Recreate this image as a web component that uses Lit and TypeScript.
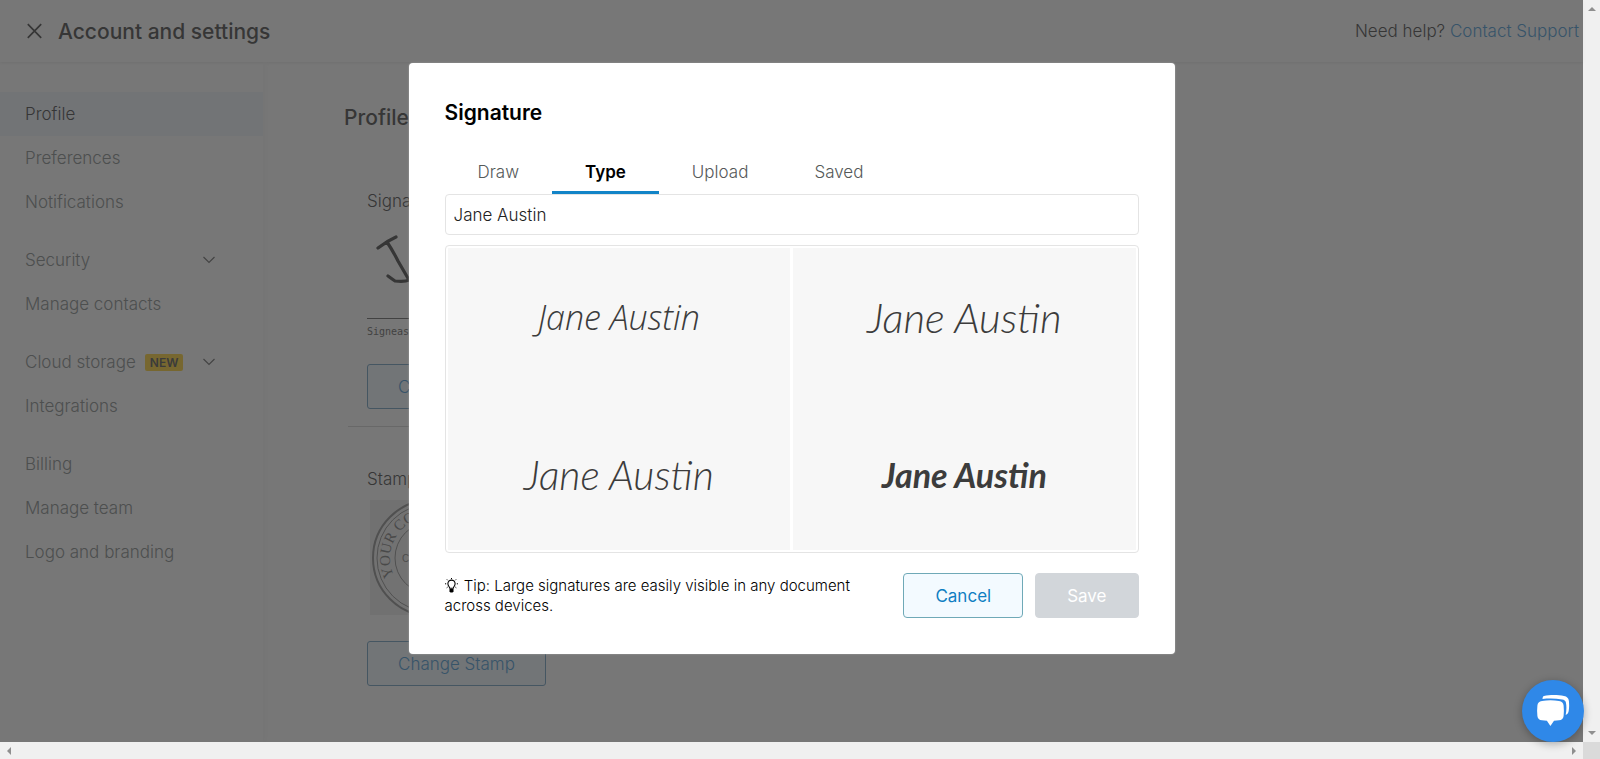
import { LitElement, html, css, svg, nothing } from "lit";
import { customElement, state } from "lit/decorators.js";
import { classMap } from "lit/directives/class-map.js";

interface NavItem {
  label: string;
  expandable?: boolean;
  badge?: string;
}

const NAV_GROUPS: NavItem[][] = [
  [{ label: "Profile" }, { label: "Preferences" }, { label: "Notifications" }],
  [{ label: "Security", expandable: true }, { label: "Manage contacts" }],
  [{ label: "Cloud storage", expandable: true, badge: "NEW" }, { label: "Integrations" }],
  [{ label: "Billing" }, { label: "Manage team" }, { label: "Logo and branding" }],
];

const TABS = ["Draw", "Type", "Upload", "Saved"];
const SIGNATURE_STYLES = ["plain", "flowing", "fine", "brush"];

@customElement("settings-nav")
class SettingsNav extends LitElement {
  static styles = css`
    :host {
      display: block;
      font-size: 17px;
    }
    .nav {
      display: flex;
      flex-direction: column;
      gap: 14px;
      padding-top: 30px;
    }
    .group {
      list-style: none;
      margin: 0;
      padding: 0;
    }
    .item {
      display: flex;
      align-items: center;
      gap: 9px;
      height: 44px;
      padding: 0 47px 0 25px;
      color: #808686;
      text-decoration: none;
    }
    .item.current {
      background: #f0f6fd;
      color: #3c3c3c;
    }
    .badge {
      padding: 0 5px;
      border-radius: 2px;
      background: #ffd02b;
      color: #4b4b4b;
      font-size: 12px;
      font-weight: 600;
      line-height: 17px;
    }
    .chevron {
      margin-left: auto;
    }
  `;

  render() {
    return html`<nav class="nav" aria-label="Settings">
      ${NAV_GROUPS.map(
        (group) => html`<ul class="group">
          ${group.map(
            (item) => html`<li>
              <a
                href="#"
                class=${classMap({ item: true, current: item.label === "Profile" })}
                >${item.label}
                ${item.badge ? html`<span class="badge">${item.badge}</span>` : nothing}
                ${item.expandable
                  ? html`<svg class="chevron" width="14" height="10" viewBox="0 0 14 10" aria-hidden="true">
                      <path d="M1.5 2 7 7.5 12.5 2" fill="none" stroke="#666" stroke-width="1.2" />
                    </svg>`
                  : nothing}
              </a>
            </li>`
          )}
        </ul>`
      )}
    </nav>`;
  }
}

@customElement("profile-panel")
class ProfilePanel extends LitElement {
  static styles = css`
    :host {
      display: block;
      padding: 41px 40px 0 81px;
      color: #3c3c3c;
    }
    h1 {
      margin: 0;
      font-size: 21px;
      font-weight: 500;
      line-height: 30px;
    }
    section {
      max-width: 720px;
      margin-left: 4px;
      padding: 0 19px;
    }
    .signatures {
      padding-top: 55px;
      padding-bottom: 17px;
      border-bottom: 1px solid #d2d2d2;
    }
    .stamps {
      padding-top: 39px;
    }
    h2 {
      margin: 0;
      font-size: 17px;
      font-weight: 300;
      line-height: 26px;
    }
    .sign-area {
      display: flex;
      flex-direction: column;
      width: 260px;
      margin-top: 17px;
    }
    .sign-area svg {
      display: block;
    }
    .sign-id {
      padding-top: 5px;
      border-top: 1px solid #606060;
      color: #606060;
      font-family: "DejaVu Sans Mono", monospace;
      font-size: 10px;
      font-weight: 400;
      line-height: 15px;
    }
    .stamp {
      display: block;
      margin: 8px 0 26px 3px;
    }
    button {
      display: block;
      height: 45px;
      margin-top: 25px;
      padding: 0 30px;
      border: 1px solid #6a9cc0;
      border-radius: 3px;
      background: #f1f8fe;
      color: #4096d6;
      font: inherit;
      font-size: 17px;
    }
  `;

  private stamp() {
    return svg`
      <rect width="118" height="115" fill="#eeeeee" />
      <g transform="translate(61 58)">
        <circle r="58" fill="#f0f0f0" stroke="#8a8a8a" stroke-width="2" />
        <circle r="54" fill="none" stroke="#8a8a8a" />
        <circle r="36" fill="none" stroke="#8a8a8a" />
        <path id="ring" d="M-37 18A41 41 0 1 1 37 18" fill="none" />
        <text font-family="Liberation Serif, serif" font-size="15" fill="#757575">
          <textPath href="#ring">YOUR COMPANY NAME</textPath>
        </text>
        <text x="0" y="4" text-anchor="middle" font-family="Liberation Sans, sans-serif" font-size="10" fill="#808080">CITY, STATE</text>
      </g>`;
  }

  render() {
    return html`<h1>Profile</h1>
      <section class="signatures">
        <h2>Signatures</h2>
        <div class="sign-area">
          <svg width="120" height="87" viewBox="0 0 120 87" role="img" aria-label="Saved signature">
            <path
              d="M11 17Q20 10 29 6M20 11Q26 20 31 30L42 49Q38 51 28 50Q25 48 21 45"
              fill="none" stroke="#3c3c3c" stroke-width="3.2" stroke-linecap="round" stroke-linejoin="round"
            />
          </svg>
          <div class="sign-id">Signeasy ID</div>
        </div>
        <button type="button">Change Signature</button>
      </section>
      <section class="stamps">
        <h2>Stamp</h2>
        <svg class="stamp" width="118" height="115" viewBox="0 0 118 115" role="img" aria-label="Company stamp">
          ${this.stamp()}
        </svg>
        <button type="button">Change Stamp</button>
      </section>`;
  }
}

@customElement("signature-dialog")
class SignatureDialog extends LitElement {
  @state() private name = "Jane Austin";
  @state() private tab = "Type";

  static styles = css`
    :host {
      display: block;
      box-sizing: border-box;
      width: 766px;
      max-width: 100%;
      padding: 36px;
      border-radius: 4px;
      background: #fff;
      color: #000;
      box-shadow: 0 0 2px #aaa;
    }
    h2 {
      margin: 0;
      font-size: 21px;
      font-weight: 600;
      line-height: 27px;
    }
    button,
    input {
      font: inherit;
      font-size: 17px;
    }
    .tabs {
      display: flex;
      margin-top: 24px;
    }
    .tab {
      height: 44px;
      padding: 2px 33px 0;
      border: 0;
      border-bottom: 3px solid transparent;
      background: none;
      color: #555959;
    }
    .tab.active {
      border-color: #1284c7;
      color: #000;
      font-weight: 600;
    }
    .name {
      display: block;
      box-sizing: border-box;
      width: 100%;
      height: 41px;
      padding: 0 8px;
      border: 1px solid #e4e4e4;
      border-radius: 4px;
      color: #222;
      outline: none;
    }
    .styles {
      display: grid;
      grid-template-columns: 1fr 1fr;
      grid-auto-rows: 151px;
      gap: 0 3px;
      margin-top: 10px;
      padding: 2px;
      border: 1px solid #e4e4e4;
      border-radius: 4px;
    }
    .style {
      padding: 0;
      border: 0;
      background: #f7f7f7;
      color: #3c3c3c;
      overflow: hidden;
      white-space: nowrap;
      font-style: italic;
    }
    .plain {
      padding-bottom: 14px;
      font-family: "Open Sans", sans-serif;
      font-size: 34px;
      font-weight: 300;
    }
    .flowing {
      padding-bottom: 14px;
      font-family: Lato, sans-serif;
      font-size: 42px;
      font-weight: 300;
    }
    .fine {
      font-family: Lato, sans-serif;
      font-size: 41px;
      font-weight: 300;
    }
    .brush {
      font-family: Lato, sans-serif;
      font-size: 34px;
      font-weight: 700;
    }
    .footer {
      display: flex;
      align-items: center;
      gap: 12px;
      margin-top: 20px;
    }
    .tip {
      flex: 1;
      margin: 0;
      padding-right: 14px;
      font-size: 15px;
      line-height: 20px;
    }
    .bulb {
      margin-right: 2px;
      vertical-align: -2px;
    }
    .action {
      height: 45px;
      padding: 0 31px;
      border: 1px solid #6fa9b7;
      border-radius: 4px;
      background: #f3faff;
      color: #0f7ec2;
      font-weight: 400;
    }
    .action.save {
      border-color: #d2d6da;
      background: #d2d6da;
      color: #fff;
    }
  `;

  private onInput(event: Event) {
    this.name = (event.target as HTMLInputElement).value;
  }

  render() {
    return html`<h2>Signature</h2>
      <div class="tabs" role="tablist">
        ${TABS.map(
          (tab) => html`<button
            type="button"
            role="tab"
            aria-selected=${tab === this.tab ? "true" : "false"}
            class=${classMap({ tab: true, active: tab === this.tab })}
            @click=${() => (this.tab = tab)}
          >
            ${tab}
          </button>`
        )}
      </div>
      <input class="name" type="text" aria-label="Your name" .value=${this.name} @input=${this.onInput} />
      <div class="styles">
        ${SIGNATURE_STYLES.map(
          (style) => html`<button type="button" class=${classMap({ style: true, [style]: true })}>${this.name}</button>`
        )}
      </div>
      <div class="footer">
        <p class="tip">
          <svg class="bulb" width="13" height="15" viewBox="0 0 13 15" aria-hidden="true">
            <path
              d="M4.7 10.3C4.7 8.8 2.9 8 2.9 5.7a3.6 3.6 0 0 1 7.2 0c0 2.3-1.8 3.1-1.8 4.6z"
              fill="none" stroke="#000" stroke-width="1.1"
            />
            <path d="M4.5 11h4v2.2L7.6 14.5H5.4L4.5 13.2z" />
            <path
              d="M6.5 0v1.1M1.9 1.4l.9.9M11.1 1.4l-.9.9M0 5.8h1.2M11.8 5.8H13M1.7 9.8l.9-.7M11.3 9.8l-.9-.7"
              stroke="#000"
            />
          </svg>
          Tip: Large signatures are easily visible in any document across devices.
        </p>
        <button type="button" class="action">Cancel</button>
        <button type="button" class="action save">Save</button>
      </div>`;
  }
}

@customElement("app-root")
class AppRoot extends LitElement {
  static styles = css`
    :host {
      display: grid;
      grid-template: minmax(0, 1fr) 17px / minmax(0, 1fr) 17px;
      height: 100vh;
      background: #f0f0f0;
      font-family: Inter, "Liberation Sans", sans-serif;
      font-weight: 300;
    }
    .viewport {
      position: relative;
      display: flex;
      flex-direction: column;
      background: #fff;
    }
    .header {
      display: flex;
      align-items: center;
      gap: 16px;
      height: 62px;
      padding: 0 4px 0 27px;
      box-shadow: 0 1px 3px #e8e8e8;
      color: #3c3c3c;
      font-size: 17px;
    }
    .close {
      display: flex;
      padding: 0;
      border: 0;
      background: none;
    }
    .title {
      flex: 1;
      font-size: 21px;
      font-weight: 500;
    }
    .help a {
      color: #4096d6;
      text-decoration: none;
    }
    .body {
      display: flex;
      flex: 1;
      min-height: 0;
      overflow: hidden;
    }
    .sidebar {
      flex: 0 0 263px;
      box-shadow: 2px 0 6px #f6f6f6;
    }
    .content {
      flex: 1;
    }
    .overlay {
      position: absolute;
      inset: 0;
      display: flex;
      justify-content: center;
      align-items: flex-start;
      padding-top: 63px;
      background: rgba(51, 51, 51, 0.667);
    }
    .bar {
      display: flex;
      justify-content: space-between;
      align-items: center;
      padding: 5px;
    }
    .bar.vertical {
      flex-direction: column;
    }
    .arrow {
      fill: #8f8f8f;
    }
    .corner {
      background: #dadada;
    }
    .chat {
      position: absolute;
      right: -1px;
      bottom: 0;
      display: flex;
      align-items: center;
      justify-content: center;
      width: 62px;
      height: 62px;
      padding: 0;
      border: 0;
      border-radius: 50%;
      background: #2f88e8;
      box-shadow: 0 2px 8px rgba(0, 0, 0, 0.3);
    }
  `;

  private arrow(points: string) {
    return html`<svg class="arrow" width="8" height="8" viewBox="0 0 8 8" aria-hidden="true">
      <polygon points=${points} />
    </svg>`;
  }

  render() {
    return html`<div class="viewport">
        <header class="header">
          <button class="close" type="button" aria-label="Close">
            <svg width="15" height="16" viewBox="0 0 15 16" aria-hidden="true">
              <path d="M.8 1.2 14.2 14.8M14.2 1.2.8 14.8" stroke="#3c3c3c" stroke-width="1.7" />
            </svg>
          </button>
          <div class="title">Account and settings</div>
          <div class="help">Need help? <a href="#">Contact Support</a></div>
        </header>
        <div class="body">
          <settings-nav class="sidebar"></settings-nav>
          <profile-panel class="content"></profile-panel>
        </div>
        <div class="overlay">
          <signature-dialog role="dialog" aria-label="Signature"></signature-dialog>
        </div>
        <button class="chat" type="button" aria-label="Chat">
          <svg width="34" height="32" viewBox="0 0 34 32" aria-hidden="true">
            <path
              d="M8 .9C14-.2 22-.1 28 .9c3 .5 4.600 2.200 4.900 5 .4 4 .3 7-.2 10.200-.3 2-1.200 3.100-3 3.900.9-5 .9-9 .2-12.500-.4-2-1.700-2.800-3.800-3.100C20 3.500 13 3.300 6.500 4 6.500 2.500 7 1.100 8 .9z"
              fill="#fff"
            />
            <path
              d="M6 5.900c5.500-.9 11.500-.9 17 0 3 .5 4.300 2 4.600 4.600.4 3.600.4 6.900 0 10.400-.3 2.700-1.800 4-4.600 4.400-1.600.3-3.300.4-5 .5L14.400 31l-3.500-5.200c-1.700-.1-3.300-.2-4.900-.5-2.800-.4-4.300-1.700-4.600-4.400-.4-3.500-.4-6.800 0-10.400C1.700 7.900 3 6.400 6 5.900z"
              fill="#fff"
            />
          </svg>
        </button>
      </div>
      <div class="bar vertical">${this.arrow("0,6 4,2 8,6")}${this.arrow("0,2 4,6 8,2")}</div>
      <div class="bar">${this.arrow("6,0 2,4 6,8")}${this.arrow("2,0 6,4 2,8")}</div>
      <div class="corner"></div>`;
  }
}
